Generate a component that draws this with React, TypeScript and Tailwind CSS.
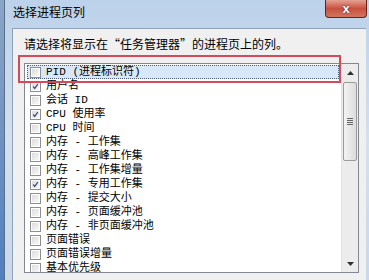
import React from 'react';

const items: { label: string; checked: boolean }[] = [
  { label: 'PID (进程标识符)', checked: false },
  { label: '用户名', checked: true },
  { label: '会话 ID', checked: false },
  { label: 'CPU 使用率', checked: true },
  { label: 'CPU 时间', checked: false },
  { label: '内存 - 工作集', checked: false },
  { label: '内存 - 高峰工作集', checked: false },
  { label: '内存 - 工作集增量', checked: false },
  { label: '内存 - 专用工作集', checked: true },
  { label: '内存 - 提交大小', checked: false },
  { label: '内存 - 页面缓冲池', checked: false },
  { label: '内存 - 非页面缓冲池', checked: false },
  { label: '页面错误', checked: false },
  { label: '页面错误增量', checked: false },
  { label: '基本优先级', checked: false },
];

const listFont = { fontFamily: '"Liberation Mono", "Noto Sans CJK SC", monospace' };
const uiFont = { fontFamily: '"Noto Sans CJK SC", "Liberation Sans", sans-serif' };

const CheckBox = ({ checked }: { checked: boolean }) => (
  <div className="w-[11px] h-[11px] shrink-0 border border-[#8e8f8f] bg-white p-[1px]">
    <div className="w-full h-full bg-gradient-to-br from-[#dcdcdc] to-[#f8f8f8] flex items-center justify-center">
      {checked && (
        <svg width="9" height="9" viewBox="0 0 9 9">
          <path d="M1.5 4.5 L3.5 7 L7.5 1.5" fill="none" stroke="#3b4f8e" strokeWidth="1.6" />
        </svg>
      )}
    </div>
  </div>
);

const ScrollBar = () => (
  <div className="w-[17px] h-full shrink-0 bg-[#ececec] border-l border-[#e2e2e2] flex flex-col">
    <div className="h-[18px] flex items-center justify-center">
      <svg width="7" height="4" viewBox="0 0 7 4">
        <path d="M0 4 L3.5 0 L7 4 Z" fill="#303030" />
      </svg>
    </div>
    <div className="mx-[1px] h-[79px] rounded-[2px] border border-[#9b9b9b] bg-gradient-to-r from-[#f3f3f3] to-[#dcdcdc] flex flex-col items-center justify-center gap-[1px]">
      <div className="w-[6px] h-[1px] bg-[#666]" />
      <div className="w-[6px] h-[1px] bg-[#666]" />
      <div className="w-[6px] h-[1px] bg-[#666]" />
      <div className="w-[6px] h-[1px] bg-[#666]" />
    </div>
    <div className="flex-1" />
    <div className="h-[17px] flex items-center justify-center">
      <svg width="7" height="4" viewBox="0 0 7 4">
        <path d="M0 0 L3.5 4 L7 0 Z" fill="#303030" />
      </svg>
    </div>
  </div>
);

export default function App() {
  return (
    <div className="relative w-[369px] h-[280px] overflow-hidden flex bg-[#7d9cc0]">
      {/* desktop edge */}
      <div className="w-[4px] shrink-0 bg-gradient-to-b from-[#8aa6c6] to-[#4f7fbf]" />

      {/* window */}
      <div className="flex-1 flex flex-col relative bg-gradient-to-b from-[#bcd2ea] via-[#d2e0ef] to-[#c9d9ea] border-l border-[#5d6f86]">
        {/* title bar */}
        <div className="h-[28px] shrink-0 flex items-start pl-[8px] pt-[4px]">
          <span className="text-[12px] leading-[16px] text-black" style={uiFont}>选择进程页列</span>
        </div>

        {/* close button */}
        <div className="absolute top-0 right-[2px] w-[42px] h-[18px] rounded-b-[4px] border border-t-0 border-[#6b2020] bg-gradient-to-b from-[#e3a193] via-[#c8503e] to-[#d0765f] flex items-center justify-center">
          <span className="text-white text-[13px] font-bold leading-none" style={{ fontFamily: '"Liberation Sans", sans-serif', textShadow: '0 0 2px #5a1010' }}>x</span>
        </div>

        {/* client */}
        <div className="flex-1 ml-[7px] mr-[3px] bg-[#f0f0f0] border-l border-t border-[#8fa2b8] pl-[11px] pr-[7px] pt-[7px] flex flex-col">
          <div className="text-[12px] leading-[16px] text-black whitespace-nowrap" style={uiFont}>
            请选择将显示在“任务管理器”的进程页上的列。
          </div>

          {/* listbox */}
          <div className="mt-[11px] h-[210px] shrink-0 border border-[#828790] bg-white flex overflow-hidden">
            <div className="flex-1 pt-[1px] overflow-hidden">
              {items.map((it, i) => (
                <div
                  key={it.label}
                  className={`h-[14px] mx-[2px] flex items-center gap-[5px] pl-[2px] ${
                    i === 0 ? 'bg-[#d9e8f8] border border-dotted border-[#4d5f80]' : 'border border-transparent'
                  }`}
                >
                  <CheckBox checked={it.checked} />
                  <span className="text-[11px] leading-[12px] text-black whitespace-nowrap" style={listFont}>
                    {it.label}
                  </span>
                </div>
              ))}
            </div>
            <ScrollBar />
          </div>
        </div>
      </div>

      {/* annotation */}
      <div className="absolute left-[18px] top-[55px] w-[323px] h-[28px] border-2 border-[#d44a5a]" />
    </div>
  );
}
